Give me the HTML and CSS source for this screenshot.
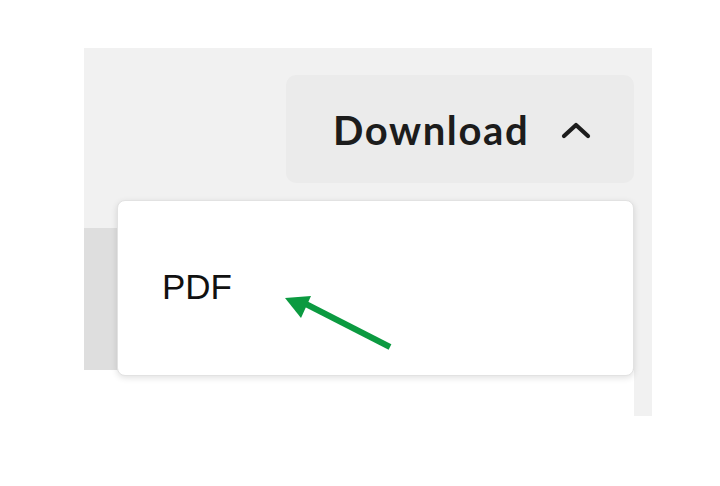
FILE: index.html
```html
<!DOCTYPE html>
<html>
<head>
<meta charset="utf-8">
<link rel="stylesheet" href="styles.css">
</head>
<body>
<div class="panel">
  <div class="toolbar">
    <button class="download-btn">
      <span class="label">Download</span>
      <svg class="chevron" width="32" height="20" viewBox="0 0 32 20"><path d="M4 16 L16 5 L28 16" fill="none" stroke="#1c1c1c" stroke-width="4.2" stroke-linecap="round" stroke-linejoin="round"/></svg>
    </button>
  </div>
  <div class="content"></div>
  <div class="strip"></div>
  <div class="menu">
    <div class="menu-item">PDF</div>
    <svg class="arrow" width="120" height="70" viewBox="0 0 120 70"><line x1="112" y1="58" x2="22" y2="12" stroke="#0b9a40" stroke-width="6"/><polygon points="7,9 33,7 23,29" fill="#0b9a40"/></svg>
  </div>
</div>
</body>
</html>
```
FILE: styles.css
```css
html, body { margin: 0; padding: 0; background: #ffffff; }
body { width: 720px; height: 486px; overflow: hidden; }
.panel {
  position: relative;
  margin: 48px 0 0 84px;
  width: 568px;
  height: 322px;
  background: #f1f1f1;
  display: flex;
  flex-direction: column;
}
.toolbar {
  display: flex;
  justify-content: flex-end;
  padding: 27px 18px 0 0;
  height: 153px;
  box-sizing: border-box;
}
.download-btn {
  width: 348px;
  height: 108px;
  border: none;
  border-radius: 10px;
  background: #ebebeb;
  display: flex;
  align-items: center;
  justify-content: flex-start;
  padding: 0 0 0 47px;
  gap: 31px;
  font-family: Lato, "Open Sans", sans-serif;
  font-weight: 700;
  font-size: 40px;
  color: #1c1c1c;
}
.label { letter-spacing: 1.6px; margin-top: 1px; }
.chevron { margin-top: 1px; }
.content {
  margin: 27px 18px 0 0;
  flex: 1;
  background: #dedede;
}
.strip {
  position: absolute;
  right: 0;
  top: 322px;
  width: 18px;
  height: 46px;
  background: #f1f1f1;
}
.menu {
  position: absolute;
  left: 33px;
  top: 152px;
  width: 517px;
  height: 176px;
  box-sizing: border-box;
  background: #ffffff;
  border: 1px solid #e2e2e2;
  border-radius: 8px;
  box-shadow: 0 2px 6px rgba(0,0,0,0.12);
  display: flex;
  align-items: center;
}
.menu-item {
  padding-left: 44px;
  font-family: "Liberation Sans", Arial, sans-serif;
  font-size: 35px;
  color: #111111;
  margin-top: -3px;
}
.arrow {
  position: absolute;
  left: 160px;
  top: 88px;
}
```
